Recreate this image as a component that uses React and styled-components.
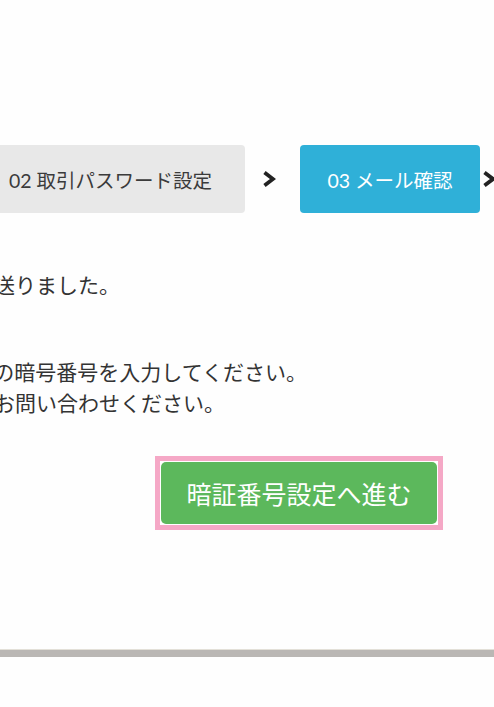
import React from 'react';
import styled, { createGlobalStyle } from 'styled-components';

const GlobalStyle = createGlobalStyle`
  html, body {
    margin: 0;
    padding: 0;
    background: #fefefe;
    overflow-x: hidden;
  }
  body {
    font-family: Lato, "Noto Sans CJK JP", sans-serif;
    color: #333;
  }
`;

const steps = [
  { no: '01', label: '会員情報入力', width: 268 },
  { no: '02', label: '取引パスワード設定', width: 269 },
  { no: '03', label: 'メール確認', width: 180, active: true },
  { no: '04', label: '暗証番号設定', width: 200 },
];

const Chevron = () => (
  <svg width="14" height="18" viewBox="0 0 14 18">
    <path d="M2.5 2.5 L11 9 L2.5 15.5" fill="none" stroke="#222" strokeWidth="3.8" strokeLinejoin="miter" />
  </svg>
);

const App = () => {
  return (
    <>
      <GlobalStyle />
      <Page>
        <Content>
          <Stepper>
            {steps.map((s, i) => (
              <React.Fragment key={s.no}>
                <Step $active={s.active} style={{ width: s.width }}>
                  {s.no} {s.label}
                </Step>
                {i < steps.length - 1 && (
                  <Arrow $tight={s.active}>
                    <Chevron />
                  </Arrow>
                )}
              </React.Fragment>
            ))}
          </Stepper>

          <Message>ご登録のメールアドレスに認証メールを送りました。</Message>

          <Message>
            受信したメールに記載されている認証用の暗号番号を入力してください。
            <br />
            メールが届かない場合は、サポートまでお問い合わせください。
          </Message>

          <Actions>
            <FocusRing>
              <NextButton type="button">暗証番号設定へ進む</NextButton>
            </FocusRing>
          </Actions>
        </Content>
        <Footer />
      </Page>
    </>
  );
};

const Page = styled.div`
  padding-top: 145px;
  min-height: 707px;
  box-sizing: border-box;
`;

const Content = styled.div`
  width: 1366px;
  margin-left: -384px;
  display: flex;
  flex-direction: column;
`;

const Stepper = styled.div`
  display: flex;
  align-items: center;
  padding-left: 37px;
`;

const Step = styled.div`
  flex: none;
  height: 68px;
  border-radius: 4px;
  display: flex;
  align-items: center;
  justify-content: center;
  font-size: 19.5px;
  white-space: nowrap;
  background: ${({ $active }) => ($active ? '#2fb0d8' : '#e8e8e8')};
  color: ${({ $active }) => ($active ? '#ffffff' : '#3b3b3b')};
`;

const Arrow = styled.div`
  flex: none;
  display: flex;
  align-items: center;
  margin: ${({ $tight }) => ($tight ? '0 24px 0 2px' : '0 24px 0 17px')};
`;

const Message = styled.p`
  margin: 56px 0 0;
  font-size: 21px;
  line-height: 31px;
  color: #333;
  white-space: nowrap;
`;

const Actions = styled.div`
  display: flex;
  justify-content: center;
  margin-top: 38px;
`;

const FocusRing = styled.div`
  display: flex;
  padding: 1px;
  border: 5px solid #f5a8c6;
  background: #fff;
`;

const NextButton = styled.button`
  width: 276px;
  height: 62px;
  border: none;
  border-radius: 5px;
  background: #5cb85c;
  color: #fff;
  font-family: "Noto Sans CJK JP", sans-serif;
  font-size: 25px;
  cursor: pointer;
`;

const Footer = styled.div`
  margin-top: 119px;
  height: 7px;
  background: #bab7b4;
  border-top: 1px solid #e3e0d8;
`;

export default App;
